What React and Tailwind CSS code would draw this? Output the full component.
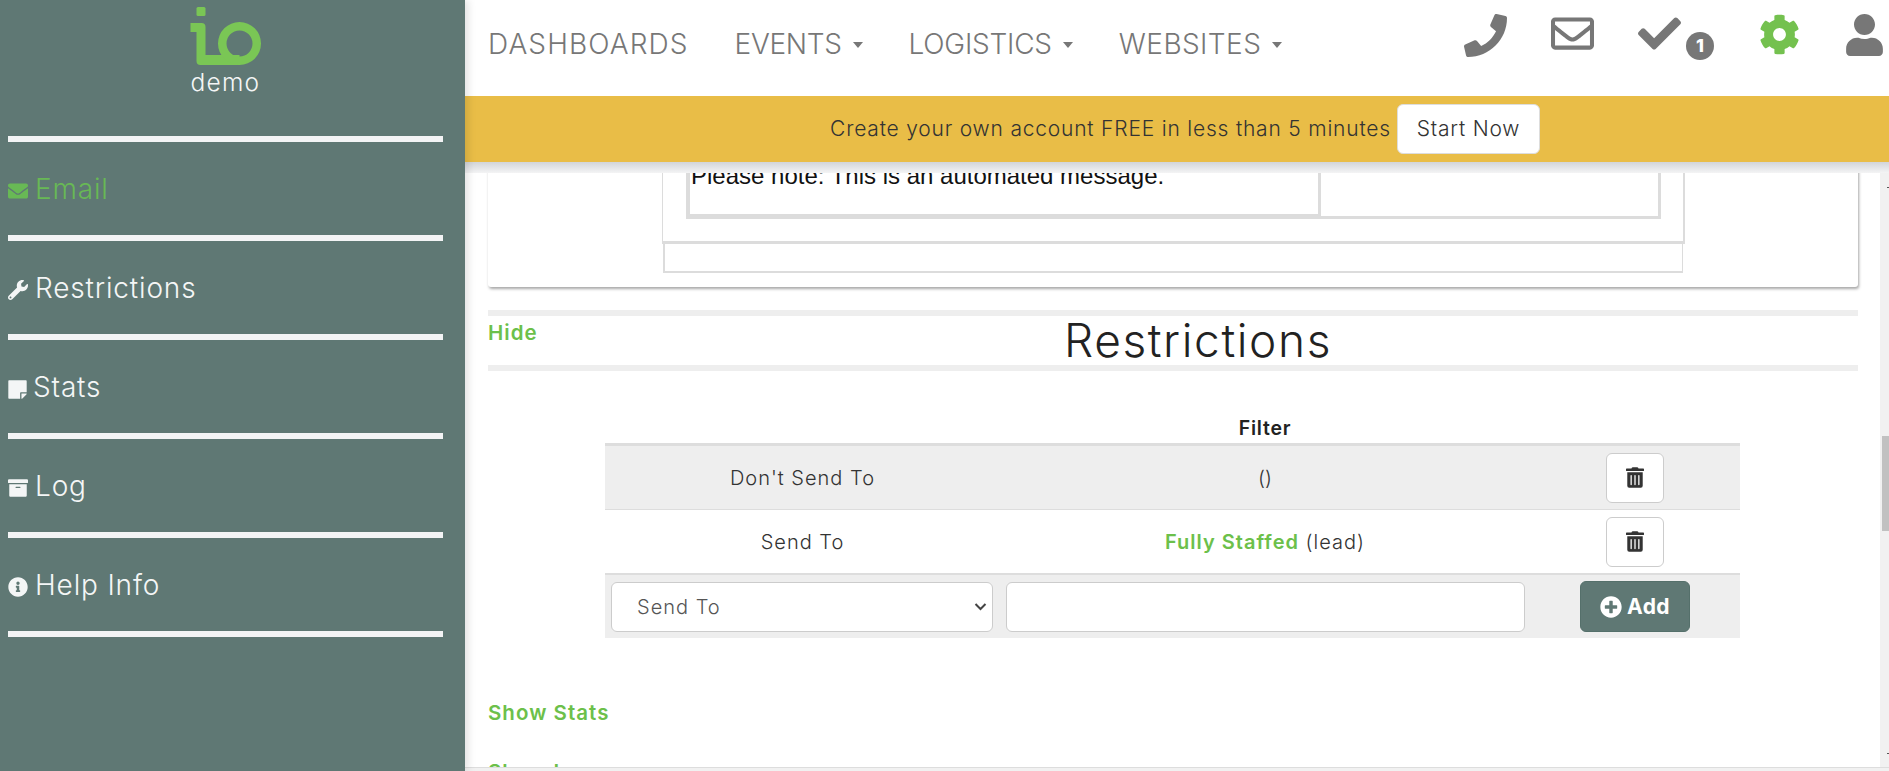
import React from 'react';
import {
  FaPhone,
  FaRegEnvelope,
  FaCheck,
  FaCog,
  FaUser,
  FaEnvelope,
  FaWrench,
  FaStickyNote,
  FaArchive,
  FaInfoCircle,
  FaTrashAlt,
  FaPlusCircle,
} from 'react-icons/fa';

const SIDE_ITEMS = [
  { label: 'Email', Icon: FaEnvelope, active: true },
  { label: 'Restrictions', Icon: FaWrench },
  { label: 'Stats', Icon: FaStickyNote, gap: 'gap-[6px]', iconClass: 'w-[19px] h-[21px]' },
  { label: 'Log', Icon: FaArchive },
  { label: 'Help Info', Icon: FaInfoCircle },
];

function Logo() {
  return (
    <svg viewBox="0 0 72 66" className="w-[72px] h-[66px] block" fill="#7ac655">
      <rect x="6.5" y="7" width="9" height="9" rx="1.5" />
      <path d="M0.5 23h11a4 4 0 0 1 4 4v28h34v10H10.5a4 4 0 0 1-4-4V32H0.5z" />
      <path
        fillRule="evenodd"
        d="M49.5 22a21.5 21.5 0 1 1 0 43a21.5 21.5 0 1 1 0-43zm0 8.5a13 13 0 1 0 0 26a13 13 0 0 0 0-26z"
      />
    </svg>
  );
}

function Sidebar() {
  return (
    <aside className="relative z-20 w-[465px] h-[771px] shrink-0 bg-[#5f7874] pl-[8px] pr-[22px] shadow-[3px_0_8px_rgba(0,0,0,0.12)]">
      <div className="flex flex-col items-center h-[136px]">
        <Logo />
        <span className="text-[24.5px] leading-[32px] tracking-[0.05em] font-light text-[#f4f6f6]">demo</span>
      </div>
      <div className="border-t-[6px] border-[#f3f4f5]">
        {SIDE_ITEMS.map(({ label, Icon, active, gap, iconClass }) => (
          <div
            key={label}
            className={`flex items-center h-[99px] border-b-[6px] border-[#f3f4f5] ${gap || 'gap-[7px]'} ${
              active ? 'text-[#68b955]' : 'text-[#f4f6f6]'
            }`}
          >
            <Icon className={`${iconClass || 'w-[20px] h-[20px]'} mt-[5px] shrink-0`} />
            <span className="text-[28px] leading-none font-light tracking-[0.03em]">{label}</span>
          </div>
        ))}
      </div>
    </aside>
  );
}

function NavLink({ label, caret, tracking }) {
  return (
    <span className={`flex items-center gap-[11px] text-[28px] font-light text-[#777] ${tracking}`}>
      {label}
      {caret && <span className="mt-[3px] border-x-[5.5px] border-x-transparent border-t-[6px] border-t-[#777]" />}
    </span>
  );
}

function TopNav() {
  return (
    <nav className="h-[96px] flex items-center justify-between pl-[23px] pr-[6px] bg-white">
      <div className="flex items-center gap-[46px] -mt-[9px]">
        <NavLink label="DASHBOARDS" tracking="tracking-[0.039em]" />
        <NavLink label="EVENTS" caret tracking="tracking-[-0.012em]" />
        <NavLink label="LOGISTICS" caret tracking="tracking-[-0.008em]" />
        <NavLink label="WEBSITES" caret tracking="tracking-[0.015em]" />
      </div>
      <div className="flex items-start h-[96px] pt-[14px] text-[#777]">
        <FaPhone className="w-[43px] h-[43px]" />
        <FaRegEnvelope className="ml-[44px] mt-[-2px] w-[43px] h-[43px]" />
        <span className="ml-[44px] mt-[-2px] flex items-start">
          <FaCheck className="w-[43px] h-[43px]" />
          <span className="ml-[5px] mt-[20px] w-[28px] h-[28px] rounded-full bg-[#777] text-white text-[18px] leading-[28px] font-extrabold text-center">
            1
          </span>
        </span>
        <FaCog className="ml-[45px] w-[41px] h-[41px] text-[#74c14f]" />
        <FaUser className="ml-[46px] w-[37px] h-[42px]" />
      </div>
    </nav>
  );
}

function Banner() {
  return (
    <div className="relative z-10 h-[66px] flex items-center justify-center gap-[6px] pl-[16px] bg-[#e9bd47] text-[#333]">
      <span className="text-[21px] tracking-[0.038em] font-light">Create your own account FREE in less than 5 minutes</span>
      <button
        type="button"
        className="w-[143px] h-[50px] rounded-[6px] bg-white border border-[#ddd] text-[21px] tracking-[0.038em] font-light text-[#333]"
      >
        Start Now
      </button>
    </div>
  );
}

function DeleteButton() {
  return (
    <button
      type="button"
      className="w-[58px] h-[50px] flex items-center justify-center rounded-[6px] bg-white border border-[#ccc] text-[#333]"
    >
      <FaTrashAlt className="w-[18px] h-[21px]" />
    </button>
  );
}

function EmailPreview() {
  return (
    <div className="relative shadow-[1px_2px_3px_rgba(0,0,0,0.35)] rounded-[3px] bg-white pl-[174px] pb-[14px] -mt-[55px]">
      <div className="w-[1023px] border-l border-r-2 border-b-[3px] border-[#dcdcdc] pl-[23px] pb-[22px]">
        <div className="flex w-[975px] h-[101px]">
          <div className="w-[635px] border-l-4 border-b-[5px] border-r-[3px] border-[#dcdcdc] pl-[1px] pt-[46px] font-['Liberation_Sans',Arial,sans-serif] text-[24px] leading-[24px] text-[#111]">
            Please note: This is an automated message.
          </div>
          <div className="w-[340px] border-r-[3px] border-b-[3px] border-[#dcdcdc]" />
        </div>
      </div>
      <div className="w-[1020px] h-[30px] ml-[1px] -mt-px border-l-2 border-r border-b-2 border-[#dcdcdc]" />
    </div>
  );
}

function RestrictionsTable() {
  return (
    <div className="ml-[117px] mt-[44px] w-[1135px] text-[#333]">
      <div className="grid grid-cols-[395px_530px_210px] h-[28px] border-b-[3px] border-[#ddd] box-content">
        <span />
        <span className="text-center text-[19.5px] font-semibold tracking-[0.04em] leading-[26px] text-[#222]">Filter</span>
        <span />
      </div>
      <div className="grid grid-cols-[395px_530px_210px] items-center h-[64px] bg-[#eee] border-b border-[#ddd]">
        <span className="text-center text-[20px] font-light tracking-[0.05em]">Don't Send To</span>
        <span className="text-center text-[20px] font-light">()</span>
        <span className="flex justify-center"><DeleteButton /></span>
      </div>
      <div className="grid grid-cols-[395px_530px_210px] items-center h-[65px] border-b-2 border-[#ddd]">
        <span className="text-center text-[20px] font-light tracking-[0.05em]">Send To</span>
        <span className="text-center text-[20px] font-light tracking-[0.05em]">
          <a className="font-semibold text-[#6cc04a]">Fully Staffed</a> (lead)
        </span>
        <span className="flex justify-center"><DeleteButton /></span>
      </div>
      <div className="grid grid-cols-[395px_530px_210px] items-center h-[63px] bg-[#eee]">
        <div className="relative ml-[6px] w-[382px]">
          <select className="appearance-none w-full h-[50px] rounded-[6px] bg-white border border-[#ccc] pl-[25px] text-[20px] font-light tracking-[0.05em] text-[#555]">
            <option>Send To</option>
            <option>Don't Send To</option>
          </select>
          <svg viewBox="0 0 12 8" className="absolute right-[6px] top-[21px] w-[13px] h-[8px]" fill="none" stroke="#444" strokeWidth="2">
            <path d="M1 1l5 5 5-5" />
          </svg>
        </div>
        <input className="w-[519px] h-[50px] ml-[6px] rounded-[6px] bg-white border border-[#ccc]" />
        <span className="flex justify-center">
          <button
            type="button"
            className="w-[110px] h-[51px] flex items-center justify-center gap-[5px] rounded-[6px] bg-[#5f7874] border border-[#55706b] text-white text-[21px] font-bold tracking-[0.02em]"
          >
            <FaPlusCircle className="w-[22px] h-[22px]" />
            Add
          </button>
        </span>
      </div>
    </div>
  );
}

function Scrollbar() {
  return (
    <div className="w-[9px] h-[594px] shrink-0 bg-[#f1f1f1] flex flex-col">
      <span className="block ml-[7px] mt-[14px] w-[2px] h-px bg-[#555]" />
      <span className="block ml-[2px] mt-[248px] w-[7px] h-[95px] bg-[#c1c1c1]" />
      <span className="block ml-[7px] mt-[222px] w-[2px] h-px bg-[#555]" />
    </div>
  );
}

export default function App() {
  return (
    <div className="flex w-[1889px] h-[771px] overflow-hidden bg-white font-['Inter','Noto_Sans',sans-serif]">
      <Sidebar />
      <main className="flex-1 min-w-0 flex flex-col">
        <TopNav />
        <Banner />
        <div className="h-[11px] bg-gradient-to-b from-[#d2d5d9] to-[#f4f4f5]" />
        <div className="flex h-[594px]">
          <div className="flex-1 min-w-0 overflow-hidden pl-[23px] pr-[22px]">
            <EmailPreview />
            <div className="mt-[23px] border-y-[6px] border-[#eee] h-[61px] box-border flex">
              <a className="text-[20.5px] font-semibold tracking-[0.05em] leading-[28px] pt-[3px] text-[#6cc04a] w-[50px]">Hide</a>
              <h2 className="flex-1 text-center text-[46px] leading-[49px] font-light tracking-[0.035em] text-[#222]">Restrictions</h2>
            </div>
            <RestrictionsTable />
            <a className="block mt-[63px] text-[20.5px] font-semibold tracking-[0.05em] leading-[24px] text-[#6cc04a]">Show Stats</a>
            <a className="block mt-[35px] text-[20.5px] font-semibold tracking-[0.05em] leading-[24px] text-[#6cc04a]">Show Log</a>
          </div>
          <Scrollbar />
        </div>
        <div className="flex-1 bg-[#f1f1f1] border-t border-[#ddd]" />
      </main>
    </div>
  );
}
